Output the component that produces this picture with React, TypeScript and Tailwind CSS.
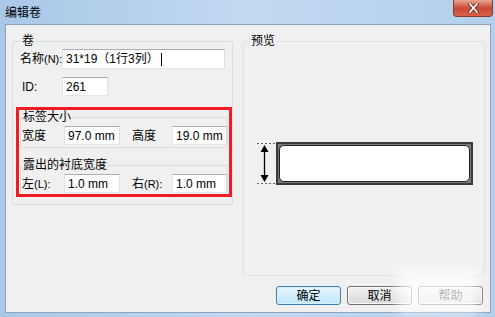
import React from "react";

const font = { fontFamily: '"Liberation Sans", "Noto Sans CJK SC", sans-serif' };

const Field = ({ value, className = "" }: { value: React.ReactNode; className?: string }) => (
    <div className={`shrink-0 h-[19px] bg-white border border-[#abadb3] border-l-[#e2e3ea] border-r-[#dbdfe6] border-b-[#e3e9ef] flex items-center pl-[3px] text-[12px] leading-none text-black whitespace-nowrap ${className}`}>
        {value}
    </div>
);

const Btn = ({ label, primary = false }: { label: string; primary?: boolean }) => (
    <button
        className={`w-[65px] h-[19px] rounded-[3px] text-[12px] leading-none text-black border ${
            primary
                ? "border-[#3c7fb1] bg-gradient-to-b from-[#eaf6fd] to-[#bee6fd] shadow-[inset_0_0_0_1px_#d9f0fc]"
                : "border-[#707070] bg-gradient-to-b from-[#f2f2f2] to-[#d9d9d9] shadow-[inset_0_0_0_1px_#fcfcfc]"
        }`}
    >
        {label}
    </button>
);

const Label = ({ children, className = "" }: { children: React.ReactNode; className?: string }) => (
    <span className={`shrink-0 whitespace-nowrap ${className}`}>{children}</span>
);

export default function App() {
    return (
        <div style={font} className="w-[495px] h-[317px] overflow-hidden bg-gradient-to-r from-[#a9c8e8] via-[#c2d9f0] to-[#b4d0ec] flex flex-col relative">
            {/* title bar */}
            <div className="h-[24px] flex items-start justify-between pl-[5px]">
                <span className="text-[12px] leading-none text-black mt-[7px]">编辑卷</span>
                <div className="w-[40px] h-[17px] mr-[2px] rounded-b-[4px] border border-[#8a3a2e] border-t-0 bg-gradient-to-b from-[#e8a493] via-[#c94a35] to-[#d8624a] flex items-center justify-center">
                    <svg width="11" height="10" viewBox="0 0 11 10">
                        <path d="M2 1 L9 9 M9 1 L2 9" stroke="#5a1a10" strokeWidth="3.2" strokeLinecap="square" />
                        <path d="M2 1 L9 9 M9 1 L2 9" stroke="#ffffff" strokeWidth="1.8" strokeLinecap="square" />
                    </svg>
                </div>
            </div>

            {/* client area */}
            <div className="ml-[5px] w-[486px] h-[289px] bg-[#f0f0f0] border border-[#8ea4be] pl-[6px] pt-[8px] flex flex-col">
                <div className="flex gap-[10px] text-[12px] leading-none text-black">
                    {/* left group */}
                    <fieldset className="w-[221px] h-[172px] border border-[#d5dfe5] rounded-[2px] px-0">
                        <legend className="ml-[8px] px-[1px] leading-[16px]">卷</legend>
                        <div className="flex items-center pl-[7px] mt-0">
                            <Label className="w-[42px]">
                                名称<span className="text-[11px]">(N):</span>
                            </Label>
                            <Field
                                className="w-[163px] h-[20px]"
                                value={
                                    <>
                                        31*19（1行3列）
                                        <span className="inline-block w-px h-[13px] bg-black ml-[2px]" />
                                    </>
                                }
                            />
                        </div>
                        <div className="flex items-center pl-[9px] mt-[8px]">
                            <Label className="w-[40px]">ID:</Label>
                            <Field className="w-[46px]" value="261" />
                        </div>

                        {/* highlighted area */}
                        <div className="ml-[3px] mt-[11px] w-[216px] h-[90px] border-[3px] border-[#ee1c25] flex flex-col px-[1px]">
                            <fieldset className="h-[38px] border border-[#dcdcdc] rounded-[2px] pl-[1px]">
                                <legend className="ml-0 px-[1px] leading-[15px]">标签大小</legend>
                                <div className="flex items-center mt-[1px]">
                                    <Label className="w-[42px]">宽度</Label>
                                    <Field className="w-[56px]" value="97.0 mm" />
                                    <Label className="w-[40px] ml-[12px]">高度</Label>
                                    <Field className="w-[55px]" value="19.0 mm" />
                                </div>
                            </fieldset>
                            <fieldset className="mt-[10px] h-[36px] border border-[#dcdcdc] border-b-transparent rounded-[2px] pl-[1px]">
                                <legend className="ml-0 px-[1px] leading-[15px]">露出的衬底宽度</legend>
                                <div className="flex items-center mt-[1px]">
                                    <Label className="w-[42px]">
                                        左<span className="text-[11px]">(L):</span>
                                    </Label>
                                    <Field className="w-[56px]" value="1.0 mm" />
                                    <Label className="w-[40px] ml-[12px]">
                                        右<span className="text-[11px]">(R):</span>
                                    </Label>
                                    <Field className="w-[55px]" value="1.0 mm" />
                                </div>
                            </fieldset>
                        </div>
                    </fieldset>

                    {/* preview group */}
                    <fieldset className="w-[242px] h-[243px] border border-[#dde3e8] rounded-[2px] px-0 flex flex-col">
                        <legend className="ml-[6px] px-[1px] leading-[16px]">预览</legend>
                        <div className="flex items-center mt-[93px] ml-[13px]">
                            <svg width="19" height="43" viewBox="0 0 19 43" className="block">
                                <path d="M0 1.5 H19 M0 41.5 H19" stroke="#666" strokeWidth="1" strokeDasharray="2 2" />
                                <path d="M7.5 8 V35" stroke="#000" strokeWidth="1.3" />
                                <path d="M7.5 3 L3.5 10 H11.5 Z M7.5 40 L3.5 33 H11.5 Z" fill="#000" />
                            </svg>
                            <div className="w-[197px] h-[43px] bg-[#3a3a3a] p-[2px]">
                                <div className="w-full h-full bg-[#7a7a7a] p-[1px]">
                                    <div className="w-full h-full bg-white rounded-[5px] border border-[#202020]" />
                                </div>
                            </div>
                        </div>
                    </fieldset>
                </div>

                {/* buttons */}
                <div className="mt-[10px] ml-[264px] flex gap-[6px]">
                    <Btn label="确定" primary />
                    <Btn label="取消" />
                    <Btn label="帮助" />
                </div>
            </div>

            {/* watermark glare over the lower right corner */}
            <div className="absolute left-[398px] top-[268px] w-[80px] h-[45px] bg-white/70 blur-[6px] pointer-events-none" />
        </div>
    );
}
